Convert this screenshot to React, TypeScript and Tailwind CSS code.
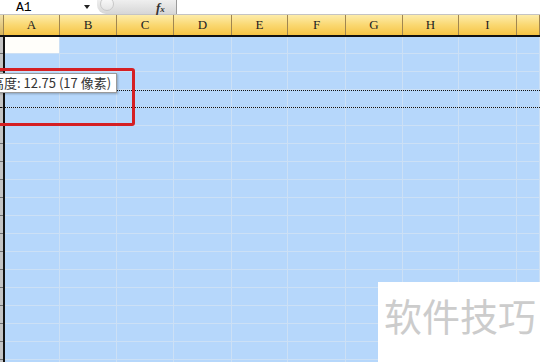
import React from 'react';

const cols = [
  { key: 'A', w: 'w-[56px]' },
  { key: 'B', w: 'w-[57px]' },
  { key: 'C', w: 'w-[57px]' },
  { key: 'D', w: 'w-[58px]' },
  { key: 'E', w: 'w-[56px]' },
  { key: 'F', w: 'w-[58px]' },
  { key: 'G', w: 'w-[57px]' },
  { key: 'H', w: 'w-[56px]' },
  { key: 'I', w: 'w-[58px]' },
  { key: '', w: 'flex-1' },
];

const rowCount = 19;

function Row({ index }: { index: number }) {
  const h = index === 0 ? 'h-[17px]' : 'h-[18px]';
  return (
    <div className={`flex ${h}`}>
      {cols.map((c, i) => (
        <div
          key={c.key + i}
          className={`${i === 0 ? 'w-[55px]' : c.w} shrink-0 border-r border-b border-[#cce0f5] ${
            index === 0 && i === 0 ? 'bg-[#fffefa]' : 'bg-[#b6d7fb]'
          }`}
        />
      ))}
    </div>
  );
}

export default function App() {
  return (
    <div className="relative w-[540px] h-[362px] overflow-hidden bg-white" style={{ fontFamily: '"Liberation Serif", serif' }}>
      {/* formula bar */}
      <div className="flex h-[15px] border-b border-[#c4c4c4]">
        <div className="relative w-[97px] shrink-0 bg-white">
          <span className="absolute left-[16px] top-[1px] text-[13px] leading-[13px] text-black" style={{ fontFamily: '"Liberation Mono", monospace' }}>A1</span>
          <span className="absolute left-[84px] top-[5px] w-0 h-0 border-l-[3.5px] border-r-[3.5px] border-t-[4px] border-l-transparent border-r-transparent border-t-[#222]" />
        </div>
        <div className="relative w-[80px] shrink-0 h-[14px] rounded-bl-[9px] bg-gradient-to-b from-[#efefef] to-[#d6d6d6] border-r border-[#9a9a9a]">
          <span className="absolute left-[3px] top-[-3px] w-[14px] h-[14px] rounded-full bg-gradient-to-b from-[#fbfbfb] to-[#e4e4e4] border border-[#c8c8c8]" />
          <span className="absolute left-[59px] top-[-2px] text-[13px] italic font-bold text-[#333]">
            f<span className="text-[9px]">x</span>
          </span>
        </div>
        <div className="flex-1 bg-white" />
      </div>

      {/* column headers */}
      <div className="flex h-[22px] border-b-2 border-[#111]">
        <div className="w-[4px] shrink-0 bg-gradient-to-b from-[#f1e1a8] to-[#d9b55a] border-r border-[#9c8450]" />
        {cols.map((c) => (
          <div
            key={'h' + c.key}
            className={`${c.w} shrink-0 flex justify-center items-end pb-[1px] border-r border-[#a08650] bg-gradient-to-b from-[#fdeca9] via-[#fad871] to-[#f6c443] text-[13px] text-[#222]`}
          >
            {c.key}
          </div>
        ))}
      </div>

      {/* cells */}
      <div className="flex">
        <div className="w-[5px] shrink-0 flex flex-col border-r-2 border-[#111]">
          {Array.from({ length: rowCount }).map((_, r) => (
            <div key={'rh' + r} className={`${r === 0 ? 'h-[17px]' : 'h-[18px]'} bg-[#c4c4c4] border-b border-[#707070]`} />
          ))}
        </div>
        <div className="flex-1 flex flex-col">
          {Array.from({ length: rowCount }).map((_, r) => (
            <Row key={r} index={r} />
          ))}
        </div>
      </div>

      {/* resize guides */}
      <div className="absolute left-0 right-0 top-[90px] border-t border-dotted border-[#111]" />
      <div className="absolute left-0 right-0 top-[107px] border-t border-dotted border-[#111]" />

      {/* height tooltip */}
      <div
        className="absolute left-[-14px] top-[73px] h-[20px] pl-[4px] pr-[5px] flex items-center bg-white border border-[#9a9a9a] shadow-[1px_1px_2px_rgba(0,0,0,0.25)] text-[13px] text-[#333] whitespace-nowrap"
        style={{ fontFamily: '"Noto Sans CJK SC", "Noto Sans", sans-serif' }}
      >
        高度: 12.75 (17 像素)
      </div>

      {/* red highlight */}
      <div className="absolute left-[-20px] top-[68px] w-[155px] h-[58px] border-[3px] border-[#d51f23] rounded-[3px]" />

      {/* watermark */}
      <div
        className="absolute left-[378px] top-[282px] right-0 bottom-0 bg-white pl-[6px] pt-[9px] text-[38px] leading-[48px] text-[#cccccc]"
        style={{ fontFamily: '"Noto Sans CJK SC", sans-serif' }}
      >
        软件技巧
      </div>
    </div>
  );
}
